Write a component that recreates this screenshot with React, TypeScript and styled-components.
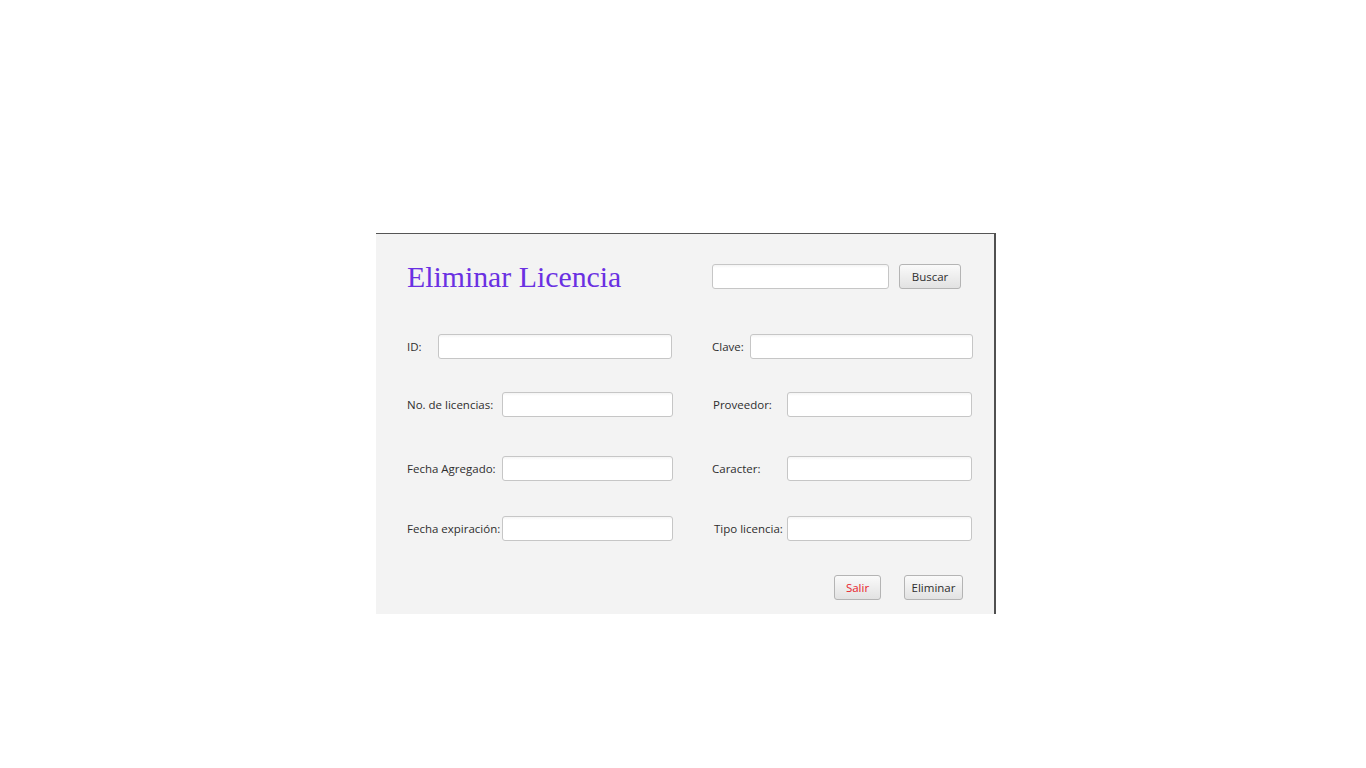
import React from "react";
import styled, { createGlobalStyle } from "styled-components";

const Global = createGlobalStyle`
  html, body { margin: 0; padding: 0; background: #ffffff; }
  * { box-sizing: border-box; }
`;

const Page = styled.div`
  padding: 233px 0 0 376px;
  min-height: 768px;
`;

const Panel = styled.div`
  width: 620px;
  height: 381px;
  background: #f3f3f3;
  border-top: 1px solid #555555;
  border-right: 2px solid #505050;
  display: flex;
  flex-direction: column;
  font-family: "Open Sans", "Noto Sans", sans-serif;
  font-size: 11.5px;
  color: #2e2e2e;
`;

const Header = styled.div`
  display: flex;
  align-items: center;
  margin-top: 30px;
  height: 25px;
`;

const Title = styled.h1`
  margin: 0 0 0 31px;
  width: 305px;
  font-family: "Liberation Serif", "DejaVu Serif", serif;
  font-weight: normal;
  font-size: 29.8px;
  color: #6a30e2;
  line-height: 25px;
  white-space: nowrap;
`;

const TextBox = styled.input<{ $w: number }>`
  width: ${(p) => p.$w}px;
  height: 25px;
  margin: 0;
  padding: 0 6px;
  border: 1px solid #c6c6c6;
  border-radius: 3px;
  background: linear-gradient(#f4f4f4 0px, #ffffff 3px, #ffffff 100%);
  font: inherit;
  outline: none;
`;

const Button = styled.button<{ $w: number; $danger?: boolean }>`
  width: ${(p) => p.$w}px;
  height: 25px;
  margin: 0;
  padding: 0;
  border: 1px solid #b4b4b4;
  border-radius: 3px;
  background: linear-gradient(#fafafa, #e2e2e2);
  font-family: "Open Sans", "Noto Sans", sans-serif;
  font-size: 11.5px;
  color: ${(p) => (p.$danger ? "#e8202a" : "#2e2e2e")};
  cursor: pointer;
`;

const SearchGap = styled.div`
  width: 10px;
`;

const Row = styled.div<{ $top: number }>`
  display: grid;
  grid-template-columns: 322px 1fr;
  align-items: center;
  margin-top: ${(p) => p.$top}px;
  height: 25px;
`;

const Field = styled.div<{ $pad: number }>`
  display: flex;
  align-items: center;
  padding-left: ${(p) => p.$pad}px;
`;

const Label = styled.label<{ $w: number }>`
  width: ${(p) => p.$w}px;
  flex: none;
  white-space: nowrap;
`;

const Actions = styled.div`
  display: flex;
  gap: 23px;
  margin-top: 34px;
  padding-left: 458px;
`;

type F = { label: string; pad: number; lw: number; iw: number };

const rows: { top: number; left: F; right: F }[] = [
  {
    top: 45,
    left: { label: "ID:", pad: 31, lw: 31, iw: 234 },
    right: { label: "Clave:", pad: 14, lw: 38, iw: 223 },
  },
  {
    top: 33,
    left: { label: "No. de licencias:", pad: 31, lw: 95, iw: 171 },
    right: { label: "Proveedor:", pad: 15, lw: 74, iw: 185 },
  },
  {
    top: 39,
    left: { label: "Fecha Agregado:", pad: 31, lw: 95, iw: 171 },
    right: { label: "Caracter:", pad: 14, lw: 75, iw: 185 },
  },
  {
    top: 35,
    left: { label: "Fecha expiración:", pad: 31, lw: 95, iw: 171 },
    right: { label: "Tipo licencia:", pad: 16, lw: 73, iw: 185 },
  },
];

const FieldView = ({ f }: { f: F }) => (
  <Field $pad={f.pad}>
    <Label $w={f.lw}>{f.label}</Label>
    <TextBox $w={f.iw} type="text" />
  </Field>
);

export default function App() {
  return (
    <>
      <Global />
      <Page>
        <Panel>
          <Header>
            <Title>Eliminar Licencia</Title>
            <TextBox $w={177} type="text" />
            <SearchGap />
            <Button $w={62}>Buscar</Button>
          </Header>
          {rows.map((r, i) => (
            <Row key={i} $top={r.top}>
              <FieldView f={r.left} />
              <FieldView f={r.right} />
            </Row>
          ))}
          <Actions>
            <Button $w={47} $danger>
              Salir
            </Button>
            <Button $w={59}>Eliminar</Button>
          </Actions>
        </Panel>
      </Page>
    </>
  );
}
